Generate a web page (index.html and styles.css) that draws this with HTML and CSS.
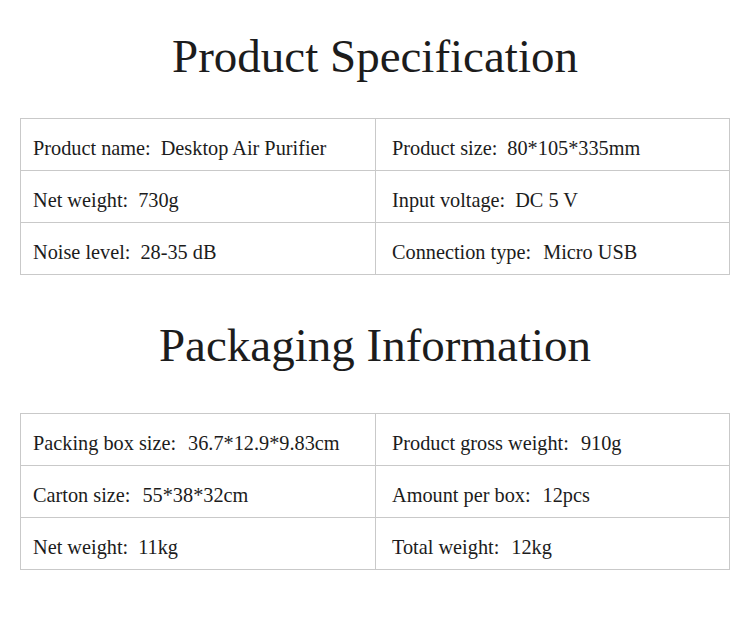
FILE: index.html
```html
<!DOCTYPE html>
<html lang="en">
<head>
<meta charset="utf-8">
<title>Product Specification</title>
<link rel="stylesheet" href="styles.css">
</head>
<body>
<main class="page">
  <section class="block block-spec">
    <h1 class="title">Product Specification</h1>
    <div class="table">
      <div class="cell left"><span class="label">Product name:</span><span class="value">Desktop Air Purifier</span></div>
      <div class="cell right"><span class="label">Product size:</span><span class="value">80*105*335mm</span></div>
      <div class="cell left"><span class="label">Net weight:</span><span class="value">730g</span></div>
      <div class="cell right"><span class="label">Input voltage:</span><span class="value">DC 5 V</span></div>
      <div class="cell left"><span class="label">Noise level:</span><span class="value">28-35 dB</span></div>
      <div class="cell right"><span class="label">Connection type:</span><span class="value wide">Micro USB</span></div>
    </div>
  </section>
  <section class="block block-pack">
    <h1 class="title">Packaging Information</h1>
    <div class="table">
      <div class="cell left"><span class="label">Packing box size:</span><span class="value wide">36.7*12.9*9.83cm</span></div>
      <div class="cell right"><span class="label">Product gross weight:</span><span class="value wide">910g</span></div>
      <div class="cell left"><span class="label">Carton size:</span><span class="value wide">55*38*32cm</span></div>
      <div class="cell right"><span class="label">Amount per box:</span><span class="value wide">12pcs</span></div>
      <div class="cell left"><span class="label">Net weight:</span><span class="value">11kg</span></div>
      <div class="cell right"><span class="label">Total weight:</span><span class="value wide">12kg</span></div>
    </div>
  </section>
</main>
</body>
</html>
```

FILE: styles.css
```css
* { box-sizing: border-box; }

html, body {
  margin: 0;
  padding: 0;
  background: #ffffff;
}

body {
  font-family: "Liberation Serif", "Times New Roman", serif;
  color: #1c1c1c;
  width: 750px;
  height: 626px;
  overflow: hidden;
}

.page {
  display: flex;
  flex-direction: column;
}

.block-spec {
  padding-top: 30px;
}

.block-pack {
  padding-top: 44px;
}

.title {
  margin: 0;
  font-size: 47px;
  line-height: 52px;
  font-weight: normal;
  text-align: center;
}

.block-spec .title {
  margin-bottom: 36px;
}

.block-pack .title {
  margin-bottom: 42px;
}

.table {
  margin-left: 20px;
  width: 710px;
  display: grid;
  grid-template-columns: 355px 354px;
  grid-auto-rows: 52px;
  border-top: 1px solid #c9c9c9;
  border-left: 1px solid #c9c9c9;
}

.cell {
  display: flex;
  align-items: center;
  padding-top: 6px;
  border-right: 1px solid #c9c9c9;
  border-bottom: 1px solid #c9c9c9;
  font-size: 20.3px;
  line-height: 22px;
  white-space: nowrap;
}

.cell.left {
  padding-left: 12px;
}

.cell.right {
  padding-left: 16px;
}

.value {
  margin-left: 10px;
}

.value.wide {
  margin-left: 12px;
}
```
